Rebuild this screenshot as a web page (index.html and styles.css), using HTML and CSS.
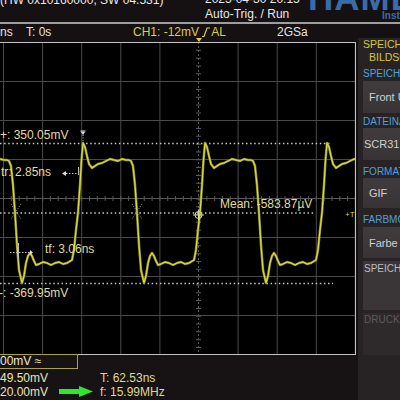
FILE: index.html
```html
<!DOCTYPE html>
<html lang="de">
<head>
<meta charset="utf-8">
<title>Oszilloskop</title>
<link rel="stylesheet" href="styles.css">
</head>
<body>
<div class="screen">
  <header class="top">
    <div class="hw">(HW 0x10160000, SW 04.531)</div>
    <div class="trig"><span>2025-04-30 20:15</span><span>Auto-Trig. / Run</span></div>
    <div class="logo"><div class="brand">HAMEG</div><div class="inst">Instruments</div></div>
  </header>
  <div class="sep"></div>
  <div class="main">
    <div class="left">
      <div class="status">
        <span class="st st-ns">ns</span>
        <span class="st st-t">T: 0s</span>
        <span class="st st-ch">CH1: -12mV <svg class="slope" width="8" height="10" viewBox="0 0 8 10"><path d="M0 9.5 H2 L5 1 H8" fill="none" stroke="#d8d040" stroke-width="1.2"/></svg>AL</span>
        <span class="st st-sa">2GSa</span>
      </div>
      <div class="scope">
        <svg class="grat" width="356" height="319" viewBox="0 36 356 319">
          <defs><clipPath id="clip"><rect x="0" y="42" width="355" height="312"/></clipPath></defs>
          <rect x="0" y="42" width="355" height="312" fill="#000"/>
          <g stroke="#4a4a4a" stroke-width="1">
            <line x1="3.5" y1="42" x2="3.5" y2="354"/>
            <line x1="42.6" y1="42" x2="42.6" y2="354"/>
            <line x1="81.7" y1="42" x2="81.7" y2="354"/>
            <line x1="120.8" y1="42" x2="120.8" y2="354"/>
            <line x1="159.9" y1="42" x2="159.9" y2="354"/>
            <line x1="238.1" y1="42" x2="238.1" y2="354"/>
            <line x1="277.2" y1="42" x2="277.2" y2="354"/>
            <line x1="316.3" y1="42" x2="316.3" y2="354"/>
            <line x1="0" y1="81.5" x2="355" y2="81.5"/>
            <line x1="0" y1="120.5" x2="355" y2="120.5"/>
            <line x1="0" y1="159.5" x2="355" y2="159.5"/>
            <line x1="0" y1="237.5" x2="355" y2="237.5"/>
            <line x1="0" y1="276.5" x2="355" y2="276.5"/>
            <line x1="0" y1="315.5" x2="355" y2="315.5"/>
          </g>
          <g stroke="#585858">
            <line x1="198.5" y1="42" x2="198.5" y2="354" stroke-dasharray="2 2"/>
            <line x1="198.5" y1="42" x2="198.5" y2="354" stroke-width="5" stroke-dasharray="1 6.82"/>
            <line x1="0" y1="198.5" x2="355" y2="198.5"/>
            <line x1="3" y1="198.5" x2="355" y2="198.5" stroke-width="5" stroke-dasharray="1 6.82"/>
          </g>
          <path d="M0 42.5 H355.5 V354.5 H0" fill="none" stroke="#c4c4c4" stroke-width="1.2"/>
          <g stroke="#c8c8c8" stroke-width="1.4" stroke-dasharray="1.5 2.6">
            <line x1="0" y1="143.5" x2="332" y2="143.5"/>
            <line x1="0" y1="283.5" x2="333" y2="283.5"/>
            <line x1="0" y1="213" x2="315" y2="213"/>
          </g>
          <g clip-path="url(#clip)" fill="none" stroke-linejoin="round" stroke-linecap="round">
            <path stroke="#8e8e20" stroke-width="2.5" d="M-50 260 l2 -10 2 -20 2 -17 2 -28 1.5 -25 1.5 -17 2 4 2 9 2 8 3 4 3 -2 3 -2 4 -1 4 -2 4 -2 4 1 4 1 4 -2 4 1 3 0 2 1 2 5 2 19 2 28 2 32 2 25 3 13 2 -7 2 -13 2 -7 2 -3 2 3 2 5 2 4 3 -1 4 -2 4 1 4 2 4 -2 4 -1 4 2 4 -1 5 -3 l2 -10 2 -20 2 -17 2 -28 1.5 -25 1.5 -17 2 4 2 9 2 8 3 4 3 -2 3 -2 4 -1 4 -2 4 -2 4 1 4 1 4 -2 4 1 3 0 2 1 2 5 2 19 2 28 2 32 2 25 3 13 2 -7 2 -13 2 -7 2 -3 2 3 2 5 2 4 3 -1 4 -2 4 1 4 2 4 -2 4 -1 4 2 4 -1 5 -3 l2 -10 2 -20 2 -17 2 -28 1.5 -25 1.5 -17 2 4 2 9 2 8 3 4 3 -2 3 -2 4 -1 4 -2 4 -2 4 1 4 1 4 -2 4 1 3 0 2 1 2 5 2 19 2 28 2 32 2 25 3 13 2 -7 2 -13 2 -7 2 -3 2 3 2 5 2 4 3 -1 4 -2 4 1 4 2 4 -2 4 -1 4 2 4 -1 5 -3 l2 -10 2 -20 2 -17 2 -28 1.5 -25 1.5 -17 2 4 2 9 2 8 3 4 3 -2 3 -2 4 -1 4 -2 4 -2 4 1 4 1 4 -2 4 1 3 0 2 1 2 5 2 19 2 28 2 32 2 25 3 13"/>
            <path stroke="#dede42" stroke-width="1.1" d="M-50 260 l2 -10 2 -20 2 -17 2 -28 1.5 -25 1.5 -17 2 4 2 9 2 8 3 4 3 -2 3 -2 4 -1 4 -2 4 -2 4 1 4 1 4 -2 4 1 3 0 2 1 2 5 2 19 2 28 2 32 2 25 3 13 2 -7 2 -13 2 -7 2 -3 2 3 2 5 2 4 3 -1 4 -2 4 1 4 2 4 -2 4 -1 4 2 4 -1 5 -3 l2 -10 2 -20 2 -17 2 -28 1.5 -25 1.5 -17 2 4 2 9 2 8 3 4 3 -2 3 -2 4 -1 4 -2 4 -2 4 1 4 1 4 -2 4 1 3 0 2 1 2 5 2 19 2 28 2 32 2 25 3 13 2 -7 2 -13 2 -7 2 -3 2 3 2 5 2 4 3 -1 4 -2 4 1 4 2 4 -2 4 -1 4 2 4 -1 5 -3 l2 -10 2 -20 2 -17 2 -28 1.5 -25 1.5 -17 2 4 2 9 2 8 3 4 3 -2 3 -2 4 -1 4 -2 4 -2 4 1 4 1 4 -2 4 1 3 0 2 1 2 5 2 19 2 28 2 32 2 25 3 13 2 -7 2 -13 2 -7 2 -3 2 3 2 5 2 4 3 -1 4 -2 4 1 4 2 4 -2 4 -1 4 2 4 -1 5 -3 l2 -10 2 -20 2 -17 2 -28 1.5 -25 1.5 -17 2 4 2 9 2 8 3 4 3 -2 3 -2 4 -1 4 -2 4 -2 4 1 4 1 4 -2 4 1 3 0 2 1 2 5 2 19 2 28 2 32 2 25 3 13"/>
          </g>
          <polygon points="196,38 202,38 199,42" fill="#d8d040"/>
          <g fill="#dddddd">
            <rect x="80.5" y="130.5" width="5" height="1.2"/>
            <polygon points="81,132 85,132 83,135"/>
            <polygon points="62,173.5 66,171 66,176"/>
            <polygon points="33,252.5 30,250 30,255"/>
          </g>
          <g stroke="#bdbdbd" stroke-width="1">
            <line x1="83" y1="135" x2="83" y2="143" stroke-dasharray="1 1.5"/>
            <line x1="66" y1="173.5" x2="78" y2="173.5" stroke-dasharray="1.5 1.5"/>
            <line x1="78.5" y1="167" x2="78.5" y2="175"/>
            <line x1="10" y1="252.5" x2="30" y2="252.5" stroke-dasharray="1.5 1.5"/>
            <line x1="18.5" y1="243" x2="18.5" y2="259"/>
          </g>
          <g stroke="#9a9a9a" stroke-width="1" stroke-dasharray="1 1.5">
            <path d="M11 204 L21 219 M21 204 L11 219"/>
            <path d="M132 204 L142 219 M142 204 L132 219"/>
          </g>
          <g stroke="#dcd890" stroke-width="1" fill="none">
            <circle cx="198.5" cy="215" r="3.5"/>
            <path d="M193 215 H204 M198.5 209.5 V220.5"/>
          </g>
        </svg>
        <span class="lbl l-plus">+: 350.05mV</span>
        <span class="lbl l-tr">tr: 2.85ns</span>
        <span class="lbl l-tf">tf: 3.06ns</span>
        <span class="lbl l-minus">-: -369.95mV</span>
        <span class="lbl l-mean">Mean: -583.87µV</span>
        <span class="lbl l-trg">+T</span>
      </div>
      <div class="info">
        <div class="range">00mV ≈</div>
        <div class="meas">
          <span class="mv">49.50mV</span>
          <span></span>
          <span class="mt">T: 62.53ns</span>
          <span class="mv">20.00mV</span>
          <svg class="arrow" width="34" height="11" viewBox="0 0 34 11"><polygon points="0,3 20,3 20,0 34,5.5 20,11 20,8 0,8" fill="#2fe62f"/></svg>
          <span class="mt">f: 15.99MHz</span>
        </div>
      </div>
    </div>
    <aside class="panel">
      <div class="title"><div>SPEICHERN /</div><div class="t2">BILDSCHIRM</div></div>
      <div class="plabel pl-1">SPEICHERN</div>
      <div class="pbtn b-1">Front USB</div>
      <div class="plabel pl-2">DATEINAME</div>
      <div class="pbtn b-2 b-shift">SCR31.GIF</div>
      <div class="plabel pl-3">FORMAT</div>
      <div class="pbtn b-3">GIF</div>
      <div class="plabel pl-4">FARBMODUS</div>
      <div class="pbtn b-4">Farbe</div>
      <div class="pblock b-5">SPEICHERN</div>
      <div class="pblock b-6">DRUCKEN</div>
    </aside>
  </div>
</div>
</body>
</html>
```
FILE: styles.css
```css
* { box-sizing: border-box; margin: 0; padding: 0; }
html, body { width: 400px; height: 400px; overflow: hidden; background: #151112; }
body { font-family: "Liberation Sans", Arial, sans-serif; color: #e2e2e2; }

.screen { width: 400px; height: 400px; overflow: hidden; display: flex; flex-direction: column; }

/* header */
.top { height: 22px; display: flex; overflow: hidden; font-size: 12px; line-height: 12px; color: #e8e8e8; flex-shrink: 0; }
.hw { width: 205px; flex-shrink: 0; margin-top: -6px; white-space: nowrap; }
.trig { width: 105px; flex-shrink: 0; margin-top: -7px; display: flex; flex-direction: column; gap: 2.5px; white-space: nowrap; }
.logo { flex: 1; min-width: 0; white-space: nowrap; color: #3b6ca8; font-weight: bold; }
.brand { font-size: 35px; line-height: 24px; height: 24px; margin-top: -13.6px; margin-left: -2px; letter-spacing: 1px; }
.inst { font-size: 10px; line-height: 10px; margin-top: 0.5px; margin-left: 72px; }

.sep { height: 2px; background: #9e9e9e; flex-shrink: 0; }

.main { display: flex; height: 376px; }
.left { width: 356px; flex-shrink: 0; display: flex; flex-direction: column; }

/* status row */
.status { height: 12px; padding-top: 2px; display: flex; font-size: 12px; line-height: 12px; white-space: nowrap; position: relative; z-index: 1; }
.st { display: block; flex-shrink: 0; }
.st-ns { width: 26px; }
.st-t { width: 107px; }
.st-ch { width: 144px; color: #d8d040; }
.slope { display: inline-block; vertical-align: -1px; margin-right: 1px; }

/* graticule */
.scope { position: relative; height: 319px; flex-shrink: 0; }
.grat { display: block; }
.lbl { position: absolute; font-size: 12px; line-height: 12px; color: #e0dc9c; white-space: nowrap; }
.l-plus { top: 93px; left: 0; }
.l-tr { top: 130px; left: 1px; }
.l-tf { top: 207px; left: 45px; }
.l-minus { top: 251px; left: -1px; }
.l-mean { top: 162px; left: 220px; }
.l-trg { top: 175px; left: 345px; font-size: 8px; line-height: 8px; color: #d4d040; }

/* bottom info */
.info { flex: 1; background: #171314; font-size: 12px; white-space: nowrap; }
.range { width: 80px; height: 15px; margin-top: -1px; margin-left: -2px; border: 1px solid #aaa046; line-height: 13px; padding-left: 1px; color: #ece8d0; position: relative; }
.meas { display: grid; grid-template-columns: 59px 41px auto; grid-template-rows: 14px 14px; margin-top: 2px; line-height: 14px; }
.mv { color: #e8e4b6; }
.mt { color: #ddd990; }
.arrow { display: block; margin-top: 1px; }

/* side panel */
.panel { width: 42px; flex-shrink: 0; margin-left: 2px; margin-top: 14px; background: #272324; padding-left: 5px; overflow: hidden; display: flex; flex-direction: column; white-space: nowrap; }
.title { font-size: 10.5px; line-height: 13px; color: #d6ca3a; height: 26px; flex-shrink: 0; }
.t2 { padding-left: 6px; }
.plabel { font-size: 10px; line-height: 12px; height: 12px; color: #52a0d8; flex-shrink: 0; }
.pl-1 { margin-top: 4px; }
.pl-2 { margin-top: 3px; }
.pl-3 { margin-top: 6px; }
.pl-4 { margin-top: 6px; }
.pbtn { width: 80px; background: linear-gradient(#403c3d, #383435); color: #d0d0d0; font-size: 11px; display: flex; align-items: center; padding-left: 6px; flex-shrink: 0; }
.b-1 { height: 32px; margin-top: 1px; }
.b-2 { height: 32px; }
.b-shift { padding-left: 1px; }
.b-3 { height: 30px; }
.b-4 { height: 31px; margin-top: 1px; }
.pblock { width: 80px; flex-shrink: 0; font-size: 10px; line-height: 12px; padding-left: 1px; }
.b-5 { height: 49px; margin-top: 3px; padding-top: 2px; background: #3a3637; color: #bdbdbd; }
.b-6 { height: 42px; margin-top: 3px; padding-top: 1px; background: #2e2a2b; color: #5e5a5b; }
```
